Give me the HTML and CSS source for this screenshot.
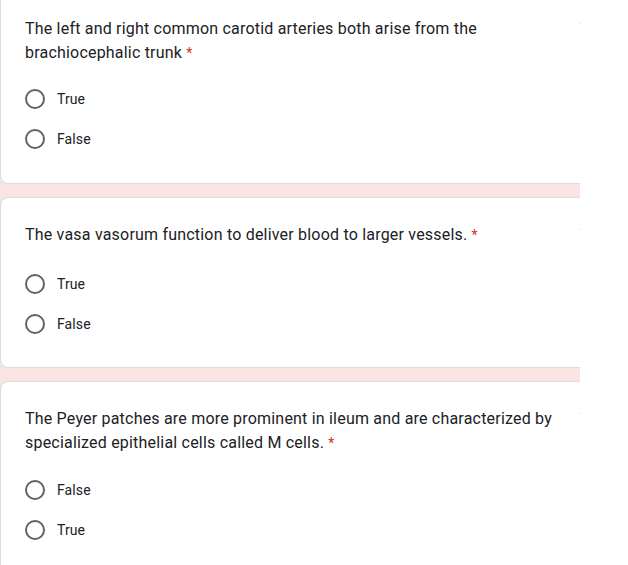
FILE: index.html
```html
<!DOCTYPE html>
<html>
<head>
<meta charset="utf-8">
<link rel="stylesheet" href="styles.css">
</head>
<body>
<div class="page">
  <div class="card first">
    <div class="qrow">
      <div class="question">The left and right common carotid arteries both arise from the brachiocephalic trunk <span class="req">*</span></div>
      <span class="pts">1</span>
    </div>
    <div class="options two">
      <div class="opt"><span class="radio"></span><span class="label">True</span></div>
      <div class="opt"><span class="radio"></span><span class="label">False</span></div>
    </div>
  </div>
  <div class="card">
    <div class="qrow">
      <div class="question">The vasa vasorum function to deliver blood to larger vessels. <span class="req">*</span></div>
      <span class="pts">1</span>
    </div>
    <div class="options">
      <div class="opt"><span class="radio"></span><span class="label">True</span></div>
      <div class="opt"><span class="radio"></span><span class="label">False</span></div>
    </div>
  </div>
  <div class="card last">
    <div class="qrow">
      <div class="question">The Peyer patches are more prominent in ileum and are characterized by specialized epithelial cells called M cells. <span class="req">*</span></div>
      <span class="pts">1</span>
    </div>
    <div class="options two">
      <div class="opt"><span class="radio"></span><span class="label">False</span></div>
      <div class="opt"><span class="radio"></span><span class="label">True</span></div>
    </div>
  </div>
</div>
</body>
</html>
```
FILE: styles.css
```css
html, body {
  margin: 0;
  padding: 0;
  background: #ffffff;
  overflow: hidden;
}
.page {
  width: 580px;
  background: #fae3e3;
  display: flex;
  flex-direction: column;
  gap: 13px;
  margin-top: -9px;
  font-family: Roboto, "Liberation Sans", sans-serif;
  color: #202124;
}
.card {
  background: #ffffff;
  border: 1px solid #dadce0;
  border-right: none;
  border-radius: 8px 0 0 8px;
  padding: 25px 0 23px 24px;
}
.card.first {
  border-top: none;
  border-radius: 0 0 0 8px;
  padding-top: 26px;
  padding-bottom: 24px;
}
.qrow {
  display: flex;
  align-items: flex-start;
  justify-content: space-between;
}
.question {
  font-size: 16px;
  line-height: 24px;
  letter-spacing: 0.2px;
  width: 540px;
}
.req {
  color: #d93025;
  font-size: 14px;
}
.pts {
  font-size: 12px;
  line-height: 24px;
  color: #f5e2a8;
  width: 2px;
  overflow: hidden;
  margin-top: -2px;
  margin-right: -1px;
}
.options {
  margin-top: 17px;
  display: flex;
  flex-direction: column;
}
.options.two {
  margin-top: 14px;
}
.card.last .options.two {
  margin-top: 15px;
}
.opt {
  height: 40px;
  display: flex;
  align-items: center;
  gap: 12px;
}
.radio {
  width: 16px;
  height: 16px;
  border: 2px solid #5f6368;
  border-radius: 50%;
  flex: none;
}
.label {
  font-size: 14px;
  letter-spacing: 0.1px;
}
```
